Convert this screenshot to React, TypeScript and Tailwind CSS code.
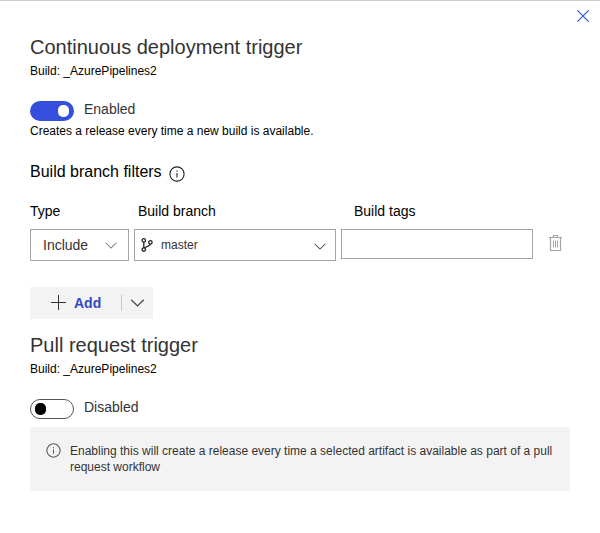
import React from "react";

function InfoIcon({ className }: { className: string }) {
  return (
    <svg viewBox="0 0 16 16" className={className} fill="none" stroke="currentColor">
      <circle cx="8" cy="8" r="7.1" strokeWidth="1.1" />
      <path d="M8 7v4.5" strokeWidth="1.1" />
      <path d="M8 4.5v1.2" strokeWidth="1.1" />
    </svg>
  );
}

function Chevron({ className }: { className: string }) {
  return (
    <svg viewBox="0 0 14 8" className={className} fill="none" stroke="currentColor" strokeWidth="1.2">
      <path d="M.7.8 7 7 13.3.8" />
    </svg>
  );
}

function BranchIcon() {
  return (
    <svg viewBox="0 0 12 14" className="h-3.5 w-3 shrink-0 text-[#222]" fill="none" stroke="currentColor" strokeWidth="1.3">
      <circle cx="2.8" cy="2.4" r="1.7" />
      <circle cx="2.8" cy="11.6" r="1.7" />
      <circle cx="9.4" cy="4.4" r="1.7" />
      <path d="M2.8 4.1v5.8M9.3 6.1C9.3 8.7 5.6 7.4 3.9 10" />
    </svg>
  );
}

function TrashIcon() {
  return (
    <svg viewBox="0 0 13 16" className="mt-1.5 ml-4 h-4 w-[13px] shrink-0 text-[#a5a5a5]" fill="none" stroke="currentColor" strokeWidth="1.2">
      <path d="M0 2.5h13M4.5 2.5v-2h4v2M1.5 2.5v13h10v-13" />
      <path d="M4.5 5.5v7M6.5 5.5v7M8.5 5.5v7" strokeWidth="1" />
    </svg>
  );
}

function TriggerHeader({ title }: { title: string }) {
  return (
    <header>
      <h2 className="text-[20px] leading-7 text-[#333]">{title}</h2>
      <p className="mt-0.5 text-xs">Build: _AzurePipelines2</p>
    </header>
  );
}

function Toggle({ on }: { on: boolean }) {
  return (
    <div className="flex h-5 items-center">
      <button
        className={
          on
            ? "flex h-5 w-11 items-center justify-end rounded-full bg-[#354edb] pr-[5px]"
            : "flex h-5 w-11 items-center rounded-full border border-[#555] bg-white pl-1"
        }
      >
        <span
          className={
            on ? "h-3 w-[11px] rounded-[5px] bg-white" : "h-3 w-[11px] rounded-[5px] bg-black"
          }
        />
      </button>
      <span className="-mt-1 ml-2.5 text-sm leading-5 text-[#333]">{on ? "Enabled" : "Disabled"}</span>
    </div>
  );
}

export default function App() {
  return (
    <main className="h-[533px] w-[600px] overflow-hidden border-t border-[#ccc] bg-white font-['Liberation_Sans',Arial,sans-serif] text-black">
      <div className="flex h-8 justify-end pt-[9px] pr-[11px]">
        <svg viewBox="0 0 12 12" className="h-3 w-3 text-[#354edb]" fill="none" stroke="currentColor" strokeWidth="1.2">
          <path d="m.3.3 11.4 11.4M11.7.3.3 11.7" />
        </svg>
      </div>
      <div className="px-[30px]">
        <TriggerHeader title="Continuous deployment trigger" />
        <div className="mt-[22px]">
          <Toggle on />
        </div>
        <p className="mt-0.5 text-xs">Creates a release every time a new build is available.</p>

        <div className="mt-[21px] flex h-6 items-center">
          <h3 className="text-base leading-6">Build branch filters</h3>
          <InfoIcon className="mt-1 ml-[7px] h-4 w-4 text-[#222]" />
        </div>
        <div className="mt-[17px] flex text-sm leading-5">
          <span className="w-[108px]">Type</span>
          <span className="w-[216px]">Build branch</span>
          <span>Build tags</span>
        </div>
        <div className="mt-2 flex h-8 items-start">
          <div className="flex h-8 w-[99px] items-center justify-between border border-[#a5a5a5] pr-[11px] pl-3 text-sm text-[#333]">
            Include
            <Chevron className="h-[7px] w-3 text-[#668080]" />
          </div>
          <div className="ml-[5px] flex h-8 w-[202px] items-center border border-[#a5a5a5] pr-[9px] pl-1.5 text-xs text-[#333]">
            <BranchIcon />
            <span className="ml-2">master</span>
            <Chevron className="mt-[3px] ml-auto h-[7px] w-3 text-[#554840]" />
          </div>
          <div className="ml-[5px] h-[30px] w-[192px] border border-[#a5a5a5]" />
          <TrashIcon />
        </div>

        <div className="mt-[26px] flex h-8 w-[123px] items-center bg-[#f3f3f3]">
          <svg viewBox="0 0 15 15" className="mb-px ml-[21px] h-[15px] w-[15px] text-[#333]" fill="none" stroke="currentColor">
            <path d="M0 7.5h15M7.5 0v15" />
          </svg>
          <span className="ml-2 text-sm font-bold text-[#3549c5]">Add</span>
          <span className="ml-auto h-4 w-px bg-[#c8c8c8]" />
          <Chevron className="mr-2 ml-2 h-2 w-[15px] text-[#444]" />
        </div>

        <div className="mt-3">
          <TriggerHeader title="Pull request trigger" />
        </div>
        <div className="mt-[22px]">
          <Toggle on={false} />
        </div>
        <div className="mt-2 flex h-16 bg-[#f3f3f3] px-4 pt-4 text-xs text-[#333]">
          <InfoIcon className="h-[15px] w-[15px] shrink-0 text-[#555]" />
          <p className="ml-[9px]">
            Enabling this will create a release every time a selected artifact is available as part of a pull request workflow
          </p>
        </div>
      </div>
    </main>
  );
}
